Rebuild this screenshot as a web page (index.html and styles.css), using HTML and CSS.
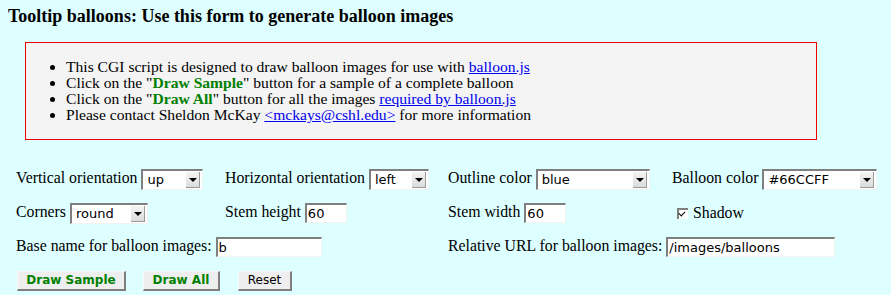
FILE: index.html
```html
<!DOCTYPE html>
<html lang="en">
<head>
    <meta charset="UTF-8">
    <title>Tooltip balloons</title>
    <link rel="stylesheet" href="styles.css">
</head>
<body>

    <h1>Tooltip balloons: Use this form to generate balloon images</h1>

    <div class="aviso">
        <ul>
            <li>This CGI script is designed to draw balloon images for use with <a href="#">balloon.js</a></li>
            <li>Click on the "<b class="verde">Draw Sample</b>" button for a sample of a complete balloon</li>
            <li>Click on the "<b class="verde">Draw All</b>" button for all the images <a href="#">required by balloon.js</a></li>
            <li>Please contact Sheldon McKay <a href="#">&lt;mckays@cshl.edu&gt;</a> for more information</li>
        </ul>
    </div>

    <form class="formulario">
        <div class="campo">Vertical orientation <span class="sel w-up"><span class="valor">up</span><span class="seta"></span></span></div>
        <div class="campo">Horizontal orientation <span class="sel w-left"><span class="valor">left</span><span class="seta"></span></span></div>
        <div class="campo">Outline color <span class="sel w-blue"><span class="valor">blue</span><span class="seta"></span></span></div>
        <div class="campo">Balloon color <span class="sel w-cor"><span class="valor">#66CCFF</span><span class="seta"></span></span></div>

        <div class="campo">Corners <span class="sel w-round"><span class="valor">round</span><span class="seta"></span></span></div>
        <div class="campo">Stem height <span class="caixa w-num">60</span></div>
        <div class="campo">Stem width <span class="caixa w-num">60</span></div>
        <div class="campo"><span class="check"></span>Shadow</div>

        <div class="campo duplo">Base name for balloon images: <span class="caixa w-base">b</span></div>
        <div class="campo duplo">Relative URL for balloon images: <span class="caixa w-url">/images/balloons</span></div>

        <div class="botoes">
            <span class="botao verde-b b-sample">Draw Sample</span>
            <span class="botao verde-b b-all">Draw All</span>
            <span class="botao b-reset">Reset</span>
        </div>
    </form>

</body>
</html>
```

FILE: styles.css
```css
body {
    font-family: "Liberation Serif", "Times New Roman", serif;
    background-color: #ddffff;
    color: #000000;
    margin: 8px;
    font-size: 16px;
}

h1 {
    font-size: 18px;
    line-height: 16px;
    margin: 0 0 18px 0;
}

.aviso {
    background-color: #f4f4f4;
    border: 1px solid #ee0000;
    width: 790px;
    margin-left: 17px;
}

.aviso ul {
    margin: 16px 0;
    padding-left: 40px;
    font-size: 15.6px;
    line-height: 16px;
}

.aviso a {
    color: #0000ee;
}

.verde {
    color: #008000;
}

.formulario {
    display: grid;
    grid-template-columns: 209px 223px 224px auto;
    grid-auto-rows: 34px;
    align-items: center;
    margin: 22px 0 0 8px;
    font-size: 15.8px;
}

.campo {
    white-space: nowrap;
}

.duplo {
    grid-column: span 2;
}

.sel, .caixa {
    display: inline-flex;
    align-items: center;
    vertical-align: middle;
    box-sizing: border-box;
    background: #ffffff;
    border-top: 2px solid #7f7f7f;
    border-left: 2px solid #7f7f7f;
    border-right: 1px solid #f2f2f2;
    border-bottom: 1px solid #f2f2f2;
    font-family: "DejaVu Sans", Verdana, sans-serif;
    font-size: 13px;
    height: 21px;
}

.sel .valor {
    flex: 1;
    padding-left: 4px;
}

.seta {
    width: 13px;
    height: 15px;
    margin-right: 2px;
    background: linear-gradient(#f4f4f4, #dcdcdc);
    border-right: 1px solid #9a9a9a;
    border-bottom: 1px solid #9a9a9a;
    position: relative;
}

.seta::after {
    content: "";
    position: absolute;
    left: 3px;
    top: 6px;
    border-left: 4px solid transparent;
    border-right: 4px solid transparent;
    border-top: 4px solid #000000;
}

.caixa {
    height: 20px;
    padding-left: 1px;
}

.w-up { width: 62px; }
.w-left { width: 60px; }
.w-blue { width: 114px; }
.w-cor { width: 115px; }
.w-round { width: 78px; }
.w-num { width: 42px; }
.w-base { width: 106px; }
.w-url { width: 169px; }

.check {
    display: inline-block;
    vertical-align: middle;
    box-sizing: border-box;
    width: 11px;
    height: 11px;
    margin: 0 5px 2px 5px;
    background: #ffffff;
    border-top: 2px solid #7f7f7f;
    border-left: 2px solid #7f7f7f;
    position: relative;
}

.check::after {
    content: "";
    position: absolute;
    left: 1px;
    top: 0px;
    width: 3px;
    height: 5px;
    border-right: 1.5px solid #000000;
    border-bottom: 1.5px solid #000000;
    transform: rotate(45deg);
}

.botoes {
    grid-column: 1 / -1;
    display: flex;
    align-items: center;
}

.botao {
    display: inline-block;
    box-sizing: border-box;
    height: 20px;
    line-height: 17px;
    padding: 0;
    text-align: center;
    white-space: nowrap;
    background: #eeeeee;
    border-top: 1px solid #f8f8f8;
    border-left: 1px solid #f8f8f8;
    border-right: 2px solid #7f7f7f;
    border-bottom: 2px solid #7f7f7f;
    font-family: "DejaVu Sans", Verdana, sans-serif;
    font-size: 12px;
    color: #000000;
}

.verde-b {
    color: #008000;
    font-weight: bold;
}

.b-sample { width: 109px; margin: 0 17px 0 1px; }
.b-all { width: 77px; margin-right: 18px; }
.b-reset { width: 54px; }
```
